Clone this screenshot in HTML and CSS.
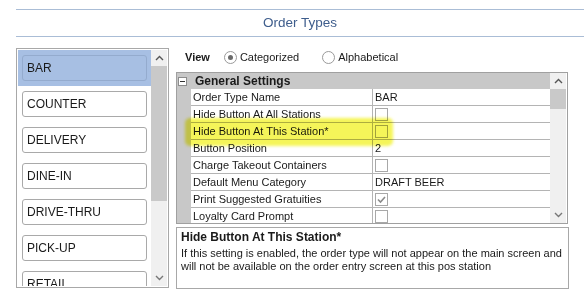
FILE: index.html
```html
<!DOCTYPE html>
<html>
<head>
<meta charset="utf-8">
<link rel="stylesheet" href="styles.css">
</head>
<body>
<div class="header"><span class="title">Order Types</span></div>
<div class="main">
  <div class="list">
    <div class="items">
      <div class="item sel"><div class="box">BAR</div></div>
      <div class="item"><div class="box">COUNTER</div></div>
      <div class="item"><div class="box">DELIVERY</div></div>
      <div class="item"><div class="box">DINE-IN</div></div>
      <div class="item"><div class="box">DRIVE-THRU</div></div>
      <div class="item"><div class="box">PICK-UP</div></div>
      <div class="item"><div class="box">RETAIL</div></div>
    </div>
    <div class="vscroll">
      <div class="arrow"><svg width="9" height="6" viewBox="0 0 9 6"><path d="M1 5 L4.5 1.5 L8 5" fill="none" stroke="#555" stroke-width="1.4"/></svg></div>
      <div class="thumb list-thumb"></div>
      <div class="track"></div>
      <div class="arrow"><svg width="9" height="6" viewBox="0 0 9 6"><path d="M1 1 L4.5 4.5 L8 1" fill="none" stroke="#777" stroke-width="1.4"/></svg></div>
    </div>
  </div>
  <div class="right">
    <div class="view">
      <span class="view-label">View</span>
      <span class="radio on"><span class="dot"></span></span><span class="rlabel">Categorized</span>
      <span class="radio"></span><span class="rlabel">Alphabetical</span>
    </div>
    <div class="grid">
      <div class="gbody">
        <div class="ghead"><span class="minus"></span><span class="ghead-text">General Settings</span></div>
        <div class="grow"><div class="gm"></div><div class="gname">Order Type Name</div><div class="gval">BAR</div></div>
        <div class="grow"><div class="gm"></div><div class="gname">Hide Button At All Stations</div><div class="gval"><span class="cb"></span></div></div>
        <div class="grow"><div class="gm"></div><div class="gname">Hide Button At This Station*</div><div class="gval"><span class="cb"></span></div></div>
        <div class="grow"><div class="gm"></div><div class="gname">Button Position</div><div class="gval">2</div></div>
        <div class="grow"><div class="gm"></div><div class="gname">Charge Takeout Containers</div><div class="gval"><span class="cb"></span></div></div>
        <div class="grow"><div class="gm"></div><div class="gname">Default Menu Category</div><div class="gval">DRAFT BEER</div></div>
        <div class="grow"><div class="gm"></div><div class="gname">Print Suggested Gratuities</div><div class="gval"><span class="cb checked"><svg width="11" height="11" viewBox="0 0 11 11"><path d="M2 5.5 L4.5 8 L9 3" fill="none" stroke="#8a8a8a" stroke-width="1.6"/></svg></span></div></div>
        <div class="grow"><div class="gm"></div><div class="gname">Loyalty Card Prompt</div><div class="gval"><span class="cb"></span></div></div>
      </div>
      <div class="vscroll">
        <div class="arrow"><svg width="9" height="6" viewBox="0 0 9 6"><path d="M1 5 L4.5 1.5 L8 5" fill="none" stroke="#555" stroke-width="1.4"/></svg></div>
        <div class="thumb grid-thumb"></div>
        <div class="track"></div>
        <div class="arrow"><svg width="9" height="6" viewBox="0 0 9 6"><path d="M1 1 L4.5 4.5 L8 1" fill="none" stroke="#777" stroke-width="1.4"/></svg></div>
      </div>
    </div>
    <div class="desc">
      <div class="desc-title">Hide Button At This Station*</div>
      <div class="desc-text">If this setting is enabled, the order type will not appear on the main screen and<br>will not be available on the order entry screen at this pos station</div>
    </div>
  </div>
</div>
<div class="highlight"></div>
</body>
</html>
```
FILE: styles.css
```css
html, body {
  margin: 0;
  padding: 0;
  background: #ffffff;
}
body {
  width: 584px;
  height: 296px;
  overflow: hidden;
  position: relative;
  font-family: "Liberation Sans", Arial, sans-serif;
  font-size: 11px;
  color: #1a1a1a;
}
.header {
  margin: 9px 0 0 16px;
  height: 26px;
  border-top: 1px solid #aabdd6;
  border-bottom: 1px solid #aabdd6;
  display: flex;
  align-items: center;
  justify-content: center;
}
.title {
  font-size: 13.5px;
  color: #3e5d8c;
  position: relative;
  top: -1px;
}
.main {
  display: flex;
  margin-top: 11px;
  padding-left: 16px;
  gap: 7px;
}
.list {
  width: 153px;
  height: 240px;
  box-sizing: border-box;
  border: 1px solid #a8a8a8;
  padding: 1px;
  display: flex;
  overflow: hidden;
}
.items {
  width: 133px;
  overflow: hidden;
}
.item {
  height: 36px;
  box-sizing: border-box;
  padding: 5px 4px;
}
.item.sel {
  background: #a7bfe3;
}
.box {
  height: 26px;
  box-sizing: border-box;
  border: 1px solid #a9a9a9;
  border-radius: 3px;
  background: #ffffff;
  padding-left: 4px;
  line-height: 24px;
  font-size: 12px;
  color: #1a1a1a;
}
.item.sel .box {
  background: transparent;
  border-color: #94abce;
}
.vscroll {
  width: 16px;
  display: flex;
  flex-direction: column;
  background: #f0f0f0;
}
.arrow {
  height: 16px;
  display: flex;
  align-items: center;
  justify-content: center;
  flex: none;
}
.thumb {
  background: #c9c9c9;
  flex: none;
}
.list-thumb { height: 135px; }
.grid-thumb { height: 20px; }
.track { flex: 1; }
.right {
  width: 393px;
  display: flex;
  flex-direction: column;
}
.view {
  height: 18px;
  display: flex;
  align-items: center;
  padding-left: 9px;
}
.view-label {
  font-weight: bold;
  margin-right: 14px;
}
.radio {
  width: 13px;
  height: 13px;
  box-sizing: border-box;
  border: 1px solid #9a9a9a;
  border-radius: 50%;
  background: #ffffff;
  display: inline-flex;
  align-items: center;
  justify-content: center;
  margin-right: 3px;
}
.dot {
  width: 5px;
  height: 5px;
  border-radius: 50%;
  background: #6a6a6a;
}
.rlabel {
  margin-right: 23px;
}
.grid {
  margin-top: 6px;
  width: 392px;
  height: 152px;
  box-sizing: border-box;
  border: 1px solid #a0a0a0;
  display: flex;
  overflow: hidden;
}
.gbody {
  width: 373px;
  overflow: hidden;
}
.ghead {
  height: 16px;
  background: #c8c8c8;
  display: flex;
  align-items: center;
}
.minus {
  width: 9px;
  height: 9px;
  box-sizing: border-box;
  border: 1px solid #8c8c8c;
  background: #ffffff;
  margin-left: 1px;
  margin-right: 8px;
  position: relative;
}
.minus::after {
  content: "";
  position: absolute;
  left: 1px;
  right: 1px;
  top: 3px;
  height: 1px;
  background: #333;
}
.ghead-text {
  font-weight: bold;
  font-size: 12px;
}
.grow {
  height: 17px;
  display: flex;
}
.gm {
  width: 14px;
  background: #c8c8c8;
  flex: none;
}
.gname {
  width: 182px;
  flex: none;
  box-sizing: border-box;
  border-right: 1px solid #b4b4b4;
  border-bottom: 1px solid #b4b4b4;
  padding-left: 2px;
  line-height: 16px;
  white-space: nowrap;
}
.gval {
  flex: 1;
  border-bottom: 1px solid #b4b4b4;
  padding-left: 2px;
  line-height: 16px;
  display: flex;
  align-items: center;
}
.cb {
  width: 13px;
  height: 13px;
  box-sizing: border-box;
  border: 1px solid #a8a8a8;
  background: #ffffff;
  display: inline-flex;
  align-items: center;
  justify-content: center;
}
.desc {
  margin-top: 3px;
  height: 62px;
  box-sizing: border-box;
  border: 1px solid #a8a8a8;
  padding: 0 4px;
}
.desc-title {
  font-weight: bold;
  font-size: 12px;
  line-height: 18px;
}
.desc-text {
  line-height: 13px;
  margin-top: 1px;
  white-space: nowrap;
}
.highlight {
  position: absolute;
  left: 185px;
  top: 118px;
  width: 208px;
  height: 28px;
  border-radius: 5px;
  background: rgba(240, 240, 10, 0.68);
  filter: blur(1.5px);
  mix-blend-mode: multiply;
}
```
